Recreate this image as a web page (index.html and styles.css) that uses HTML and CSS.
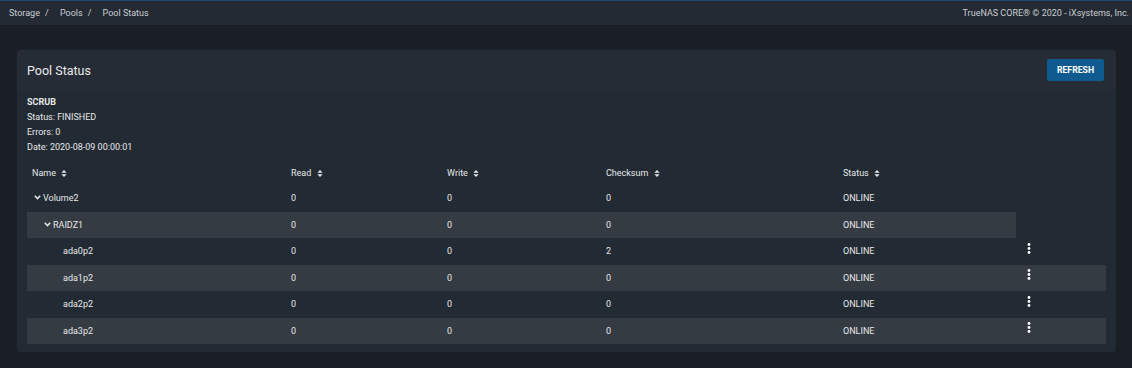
FILE: index.html
```html
<!DOCTYPE html>
<html lang="en">
<head>
    <meta charset="UTF-8">
    <meta name="viewport" content="width=device-width, initial-scale=1.0">
    <title>Pool Status</title>
    <link rel="stylesheet" href="styles.css">
</head>
<body>
    <div class="topbar">
        <div class="crumbs">
            <span>Storage</span><span class="sep">/</span>
            <span>Pools</span><span class="sep">/</span>
            <span>Pool Status</span>
        </div>
        <div class="copy">TrueNAS CORE® © 2020 - iXsystems, Inc.</div>
    </div>

    <div class="page">
        <div class="card">
            <div class="card-head">
                <h1>Pool Status</h1>
                <button type="button" class="btn">REFRESH</button>
            </div>
            <div class="card-body">
                <div class="scrub">
                    <strong>SCRUB</strong>
                    <div>Status: FINISHED</div>
                    <div>Errors: 0</div>
                    <div>Date: 2020-08-09 00:00:01</div>
                </div>

                <table class="pool">
                    <colgroup>
                        <col class="c-name">
                        <col class="c-read">
                        <col class="c-write">
                        <col class="c-sum">
                        <col class="c-status">
                        <col class="c-act">
                    </colgroup>
                    <thead>
                        <tr>
                            <th>Name <svg class="sort" viewBox="0 0 6 8"><path d="M0 3.2 3 0 6 3.2Z M0 4.8 3 8 6 4.8Z"/></svg></th>
                            <th>Read <svg class="sort" viewBox="0 0 6 8"><path d="M0 3.2 3 0 6 3.2Z M0 4.8 3 8 6 4.8Z"/></svg></th>
                            <th>Write <svg class="sort" viewBox="0 0 6 8"><path d="M0 3.2 3 0 6 3.2Z M0 4.8 3 8 6 4.8Z"/></svg></th>
                            <th>Checksum <svg class="sort" viewBox="0 0 6 8"><path d="M0 3.2 3 0 6 3.2Z M0 4.8 3 8 6 4.8Z"/></svg></th>
                            <th>Status <svg class="sort" viewBox="0 0 6 8"><path d="M0 3.2 3 0 6 3.2Z M0 4.8 3 8 6 4.8Z"/></svg></th>
                            <th></th>
                        </tr>
                    </thead>
                    <tbody>
                        <tr>
                            <td><span class="twist"><svg viewBox="0 0 7 5"><path d="M0.8 0.8 3.5 3.6 6.2 0.8"/></svg></span>Volume2</td>
                            <td>0</td><td>0</td><td>0</td><td>ONLINE</td><td></td>
                        </tr>
                        <tr class="odd">
                            <td class="lvl1"><span class="twist"><svg viewBox="0 0 7 5"><path d="M0.8 0.8 3.5 3.6 6.2 0.8"/></svg></span>RAIDZ1</td>
                            <td>0</td><td>0</td><td>0</td><td>ONLINE</td>
                        </tr>
                        <tr>
                            <td class="lvl2"><span class="twist"></span>ada0p2</td>
                            <td>0</td><td>0</td><td>2</td><td>ONLINE</td>
                            <td class="act"><svg class="kebab" viewBox="0 0 4 11"><circle cx="2" cy="1.5" r="1.4"/><circle cx="2" cy="5.5" r="1.4"/><circle cx="2" cy="9.5" r="1.4"/></svg></td>
                        </tr>
                        <tr class="odd">
                            <td class="lvl2"><span class="twist"></span>ada1p2</td>
                            <td>0</td><td>0</td><td>0</td><td>ONLINE</td>
                            <td class="act"><svg class="kebab" viewBox="0 0 4 11"><circle cx="2" cy="1.5" r="1.4"/><circle cx="2" cy="5.5" r="1.4"/><circle cx="2" cy="9.5" r="1.4"/></svg></td>
                        </tr>
                        <tr>
                            <td class="lvl2"><span class="twist"></span>ada2p2</td>
                            <td>0</td><td>0</td><td>0</td><td>ONLINE</td>
                            <td class="act"><svg class="kebab" viewBox="0 0 4 11"><circle cx="2" cy="1.5" r="1.4"/><circle cx="2" cy="5.5" r="1.4"/><circle cx="2" cy="9.5" r="1.4"/></svg></td>
                        </tr>
                        <tr class="odd">
                            <td class="lvl2"><span class="twist"></span>ada3p2</td>
                            <td>0</td><td>0</td><td>0</td><td>ONLINE</td>
                            <td class="act"><svg class="kebab" viewBox="0 0 4 11"><circle cx="2" cy="1.5" r="1.4"/><circle cx="2" cy="5.5" r="1.4"/><circle cx="2" cy="9.5" r="1.4"/></svg></td>
                        </tr>
                    </tbody>
                </table>
            </div>
        </div>
    </div>
</body>
</html>
```

FILE: styles.css
```css
* {
    box-sizing: border-box;
}

body {
    margin: 0;
    background-color: #1a1f26;
    color: #e6e8ea;
    font-family: Roboto, "Liberation Sans", sans-serif;
    font-size: 9px;
}

.topbar {
    height: 25px;
    display: flex;
    align-items: center;
    justify-content: space-between;
    padding: 0 3px 0 9px;
    background-color: #232a33;
    border-top: 1px solid #1d4a6e;
    color: #c9cdd2;
    font-size: 9px;
}
.crumbs .sep {
    margin: 0 9px 0 5px;
}

.page {
    padding: 25px 16px 16px 17px;
}

.card {
    background-color: #222a33;
    border-radius: 4px;
    padding-bottom: 8px;
}

.card-head {
    height: 40px;
    display: flex;
    align-items: center;
    justify-content: space-between;
    padding: 0 12px 0 10px;
    background-color: #252c36;
    border-radius: 4px 4px 0 0;
}
h1 {
    margin: 0;
    font-size: 12.5px;
    font-weight: 400;
    color: #e8e9ea;
}
.btn {
    height: 22px;
    width: 57px;
    border: none;
    border-radius: 2px;
    background-color: #0f5a8f;
    color: #ffffff;
    font-family: inherit;
    font-size: 8.7px;
    font-weight: 700;
    padding: 0;
}

.card-body {
    padding: 5px 10px 0 10px;
}

.scrub {
    line-height: 15px;
}
.scrub strong {
    display: block;
}

.pool {
    margin-top: 6px;
    width: 1079px;
    border-collapse: collapse;
    table-layout: fixed;
}
.c-name { width: 259px; }
.c-read { width: 156px; }
.c-write { width: 159px; }
.c-sum { width: 237px; }
.c-status { width: 178px; }
.c-act { width: 90px; }

.pool th {
    height: 24px;
    padding: 0 5px;
    text-align: left;
    font-weight: 400;
    white-space: nowrap;
}
.sort {
    width: 6px;
    height: 7px;
    margin-left: 3px;
    vertical-align: -1px;
    fill: #e6e8ea;
}

.pool td {
    height: 26.5px;
    padding: 0 5px;
    white-space: nowrap;
}
.pool tr.odd td {
    background-color: #353b42;
}
.pool td.lvl1 {
    padding-left: 15px;
}
.pool td.lvl2 {
    padding-left: 25px;
}

.twist {
    display: inline-block;
    width: 11px;
}
.twist svg {
    width: 7px;
    height: 5px;
    margin-left: 2px;
    vertical-align: 1px;
    fill: none;
    stroke: #e6e8ea;
    stroke-width: 1.5;
}

.pool td.act {
    padding-left: 11px;
}
.kebab {
    display: block;
    width: 4px;
    height: 11px;
    margin-top: -6px;
    fill: #ffffff;
}
```
